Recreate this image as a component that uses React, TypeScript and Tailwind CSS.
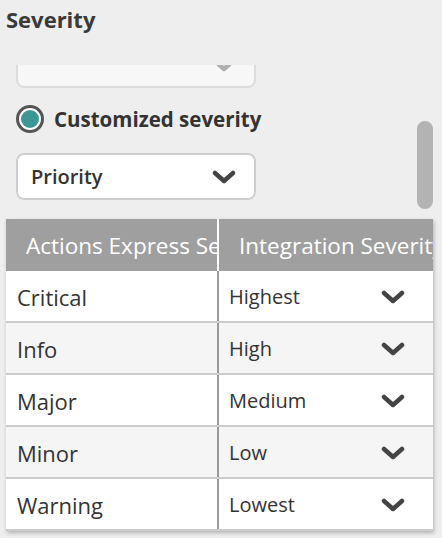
import React from 'react';

const Chevron = ({ className = '' }: { className?: string }) => (
  <svg viewBox="0 0 24 14" className={className} fill="none">
    <polyline points="3,3 12,11 21,3" stroke="currentColor" strokeWidth="4.5" strokeLinecap="round" strokeLinejoin="round" />
  </svg>
);

const rows = [
  { name: 'Critical', value: 'Highest' },
  { name: 'Info', value: 'High' },
  { name: 'Major', value: 'Medium' },
  { name: 'Minor', value: 'Low' },
  { name: 'Warning', value: 'Lowest' },
];

const App = () => {
  return (
    <div className="w-[442px] h-[538px] bg-[#eeeeee] overflow-hidden text-[#333333]" style={{ fontFamily: '"Open Sans", sans-serif' }}>
      <h1 className="px-[6px] pt-[2px] h-[65px] text-[22px] leading-[34px] font-bold text-[#3a3a3a]">Severity</h1>

      <div className="relative h-[473px] overflow-hidden">
        {/* Scrolled content */}
        <div className="-mt-[24px] pl-[16px]">
          <div className="w-[240px] h-[47px] rounded-[8px] border-2 border-[#dcdcdc] bg-[#f7f7f7] flex items-center justify-end pr-[18px]">
            <Chevron className="w-[24px] h-[14px] text-[#b0b0b0]" />
          </div>

          <label className="flex items-center gap-[10px] mt-[17px] h-[28px]">
            <span className="w-[28px] h-[28px] rounded-full border-[3px] border-[#555555] bg-white flex items-center justify-center">
              <span className="w-[18px] h-[18px] rounded-full bg-[#3d9696]" />
            </span>
            <span className="text-[20.5px] font-bold text-[#333333] leading-none">Customized severity</span>
          </label>

          <div className="mt-[20px] w-[240px] h-[47px] rounded-[8px] border-2 border-[#cfcfcf] bg-white flex items-center justify-between pl-[13px] pr-[18px]">
            <span className="text-[20px] font-semibold text-[#333333]">Priority</span>
            <Chevron className="w-[24px] h-[14px] text-[#444444]" />
          </div>
        </div>

        {/* Table */}
        <div className="ml-[6px] mt-[19px] w-[427px] overflow-hidden bg-white shadow-[1px_2px_4px_rgba(0,0,0,0.25)]">
          <div className="flex h-[52px] bg-[#a09f9f] text-white text-[22.5px] whitespace-nowrap">
            <div className="w-[211px] overflow-hidden flex items-center pl-[20px] pt-[1px]">Actions Express Severity</div>
            <div className="w-[2px] bg-white" />
            <div className="flex-1 overflow-hidden flex items-center pl-[20px] pt-[1px]">Integration Severity</div>
          </div>
          {rows.map((row, i) => (
            <div key={row.name} className={`flex h-[52px] border-b-2 border-[#cccccc] ${i % 2 === 1 ? 'bg-[#f5f5f5]' : 'bg-white'}`}>
              <div className="w-[211px] flex items-center pl-[11px] pt-[2px] text-[22px] text-[#333333]">{row.name}</div>
              <div className="w-[2px] bg-[#9a9a9a]" />
              <div className="flex-1 flex items-center justify-between pl-[10px] pr-[28px] pt-[2px] text-[20px] text-[#333333]">
                <span>{row.value}</span>
                <Chevron className="w-[24px] h-[14px] text-[#444444]" />
              </div>
            </div>
          ))}
        </div>

        {/* Scrollbar thumb */}
        <div className="absolute left-[417px] top-[56px] w-[16px] h-[88px] rounded-full bg-[#b3b3b3]" />
      </div>
    </div>
  );
};

export default App;
